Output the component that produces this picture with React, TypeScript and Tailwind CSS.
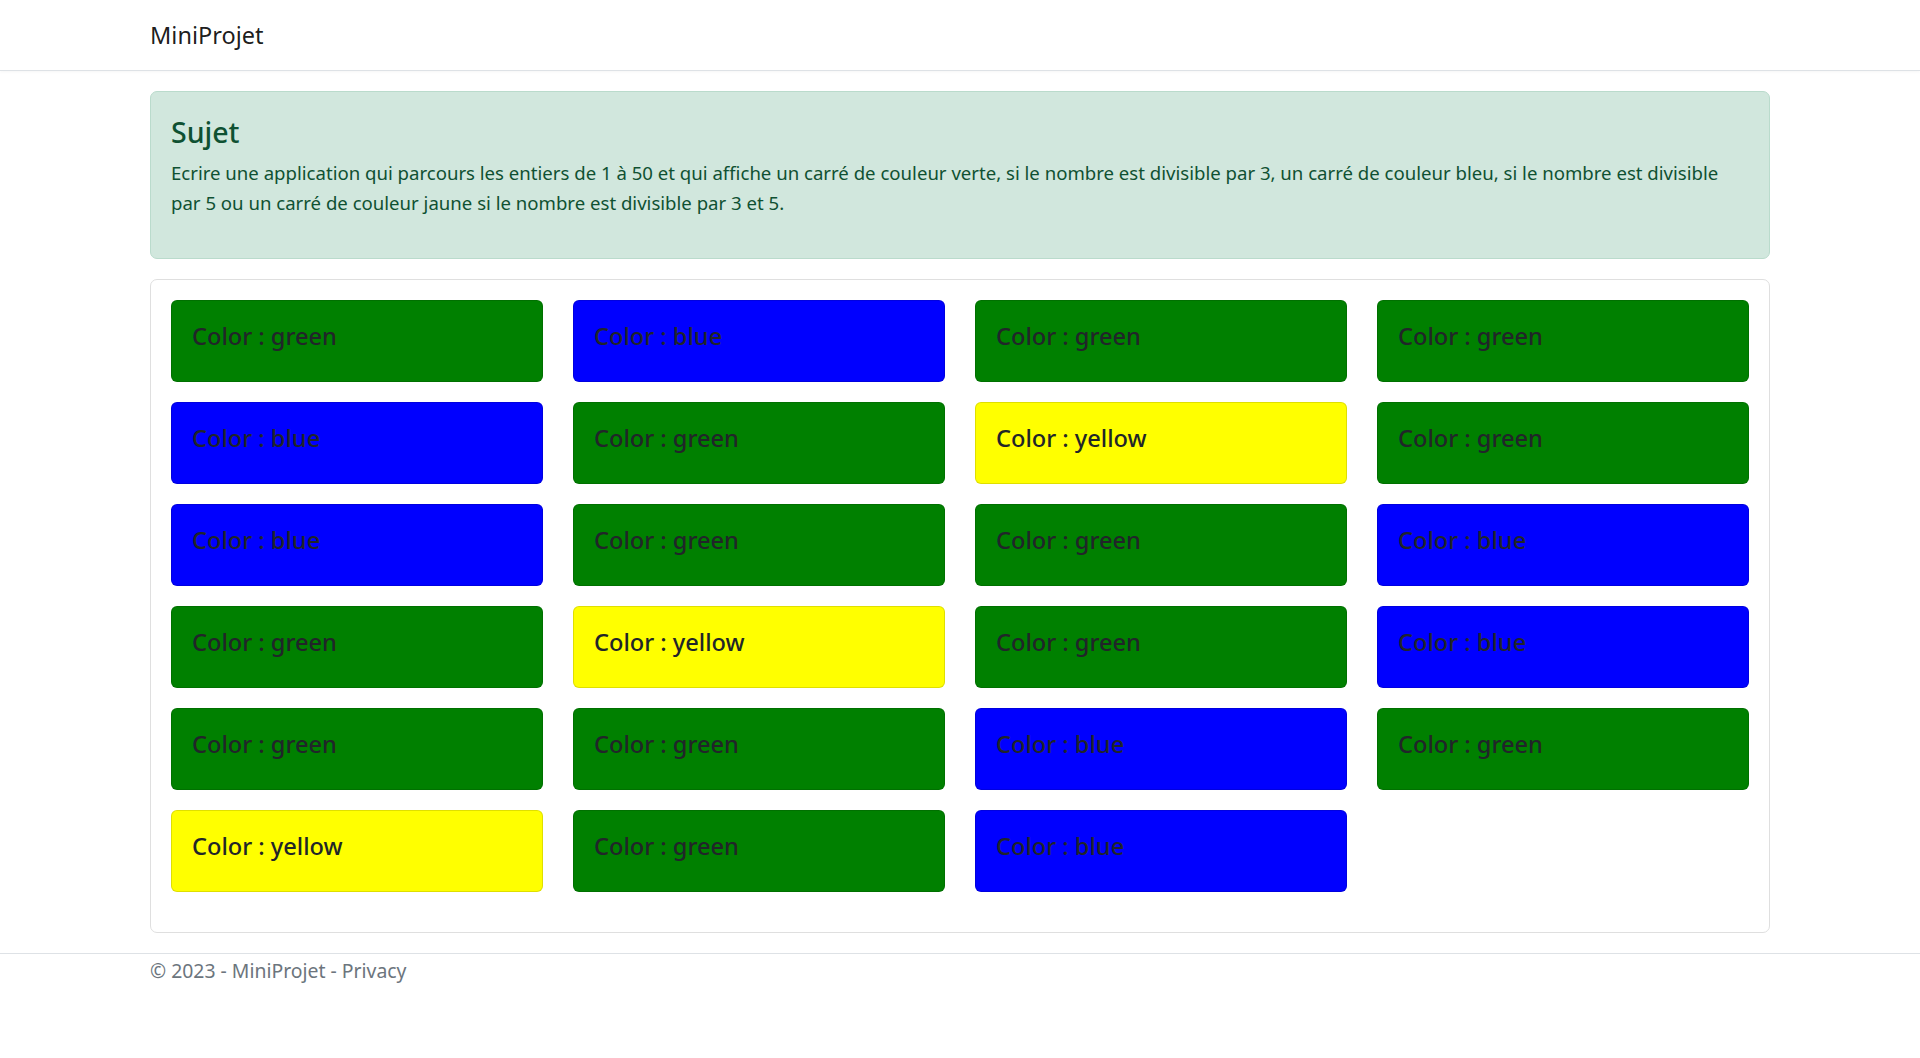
export default function App() {
    // nombres de 1 à 50 divisibles par 3 ou 5
    const squares: { n: number; color: string }[] = [];
    for (let i = 1; i <= 50; i++) {
        if (i % 3 === 0 && i % 5 === 0) squares.push({ n: i, color: "yellow" });
        else if (i % 3 === 0) squares.push({ n: i, color: "green" });
        else if (i % 5 === 0) squares.push({ n: i, color: "blue" });
    }

    const bg: Record<string, string> = {
        green: "bg-[#008000]",
        blue: "bg-[#0000ff]",
        yellow: "bg-[#ffff00]",
    };

    return (
        <div className="min-h-screen bg-white font-['Noto_Sans','Open_Sans',sans-serif] text-[19px] leading-[30px] text-[#212529]">
            <header className="h-[71px] border-b border-[#dee2e6] shadow-[0_1px_3px_rgba(0,0,0,0.04)] mb-5">
                <div className="px-[150px] h-full flex items-center">
                    <span className="text-[23.5px] leading-[30px] text-black/90 -mt-[1px]">MiniProjet</span>
                </div>
            </header>

            <main className="px-[150px]">
                <div className="bg-[#d1e7dd] border border-[#badbcc] rounded-[7px] p-5 text-[#0f5132] mb-5">
                    <h4 className="text-[28.5px] leading-[40px] font-medium mb-[6px]">Sujet</h4>
                    <p className="mb-5 text-[18.6px]">
                        Ecrire une application qui parcours les entiers de 1 à 50 et qui affiche un carré de couleur verte, si le nombre est divisible par 3, un carré de couleur bleu, si le nombre est divisible par 5 ou un carré de couleur jaune si le nombre est divisible par 3 et 5.
                    </p>
                </div>

                <div className="border border-[#dfdfdf] rounded-[7px] p-5">
                    <div className="grid grid-cols-4 gap-x-[30px]">
                        {squares.map((sq) => (
                            <div
                                key={sq.n}
                                className={`${bg[sq.color]} h-[82px] mb-5 border border-black/[0.125] rounded-[6px] px-5 pt-5`}
                            >
                                <h5 className="text-[23.6px] leading-[30px] font-medium">Color : {sq.color}</h5>
                            </div>
                        ))}
                    </div>
                </div>
            </main>

            <footer className="mt-5 border-t border-[#dee2e6]">
                <div className="px-[150px] pt-[2px] text-[19.4px] text-[#6c757d]">
                    © 2023 - MiniProjet - <a className="text-[#6c757d]">Privacy</a>
                </div>
            </footer>
        </div>
    );
}
